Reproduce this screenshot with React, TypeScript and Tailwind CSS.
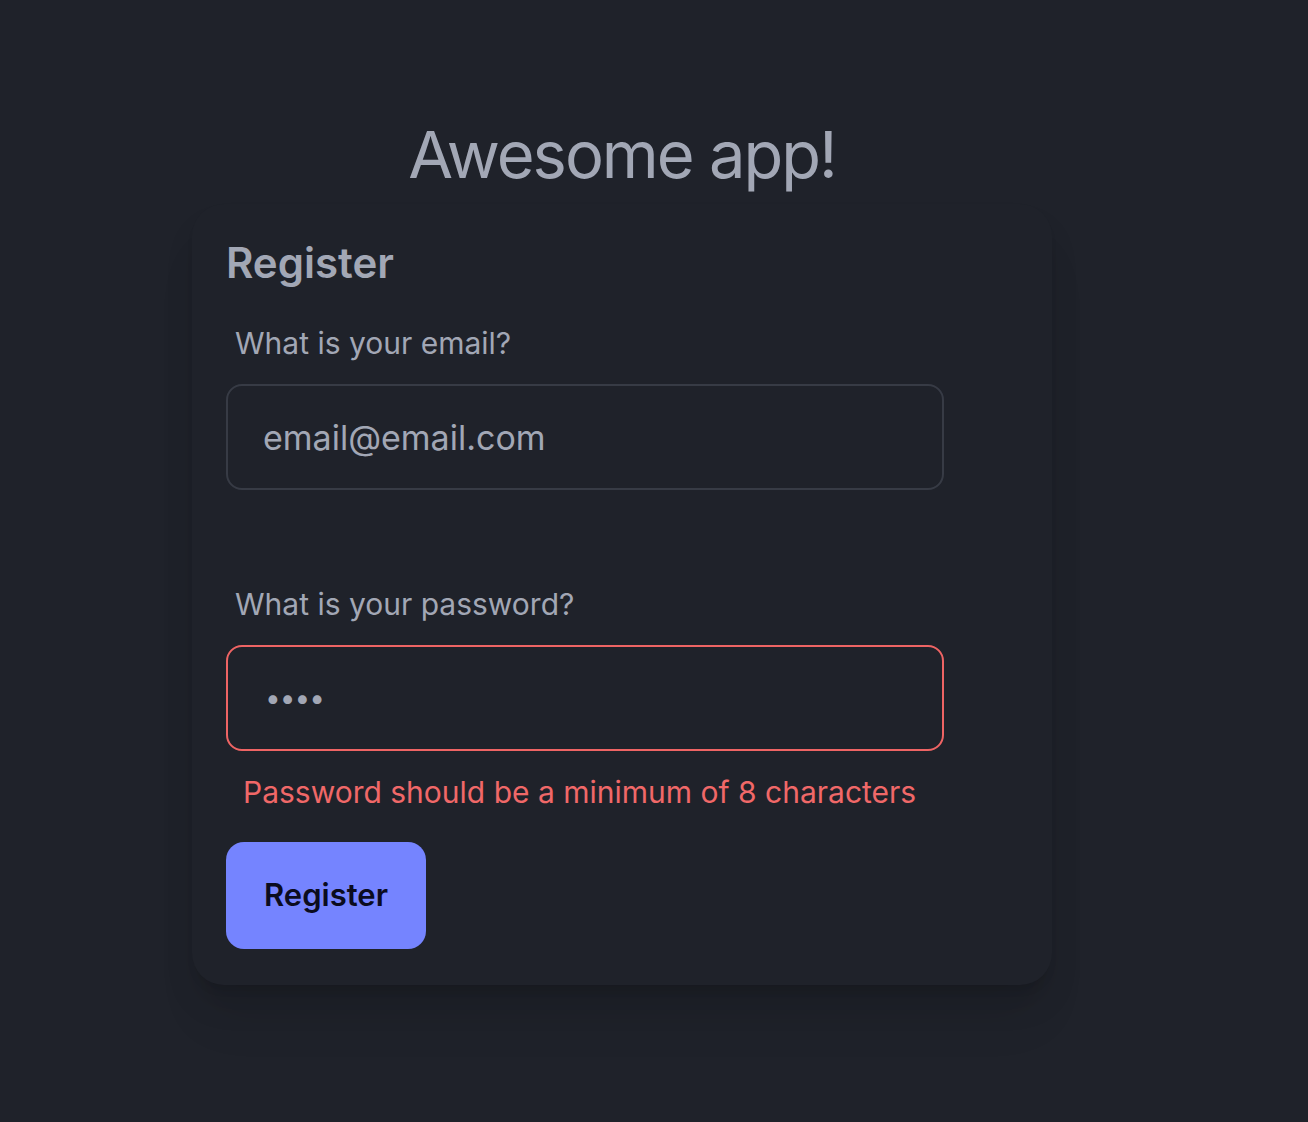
import React from "react";

const font = { fontFamily: "Inter, 'Noto Sans', sans-serif" };

export default function App() {
    return (
        <div style={font} className="min-h-screen w-full bg-[#1f222a] flex flex-col items-center pt-[115px] pr-[64px] pb-[100px]">
            <h1 className="text-[65px] leading-[80px] font-normal text-[#a2a7b5] tracking-[-2px] mb-[9px]">Awesome app!</h1>
            <div className="w-[860px] rounded-[32px] bg-[#1f222a] px-[34px] pt-[34px] pb-[36px] shadow-[0_8px_10px_-4px_rgba(7,9,12,0.1),0_22px_34px_-6px_rgba(7,9,12,0.12),0_44px_50px_-8px_rgba(7,9,12,0.06)]">
                <h2 className="text-[42px] leading-[50px] font-semibold text-[#a2a7b5] tracking-[0px]">Register</h2>
                <form className="w-[718px] flex flex-col mt-[35px]">
                    <label className="pl-[9px] text-[30px] leading-[40px] text-[#a2a7b5] mb-[21px]">What is your email?</label>
                    <input
                        type="email"
                        defaultValue="email@email.com"
                        readOnly
                        className="h-[106px] w-full rounded-[16px] border-2 border-[#373b45] bg-[#1f222a] pl-[35px] text-[34px] text-[#a2a7b5] outline-none"
                    />
                    <label className="mt-[94px] pl-[9px] text-[30px] leading-[40px] text-[#a2a7b5] mb-[21px]">What is your password?</label>
                    <input
                        type="password"
                        defaultValue="1234"
                        readOnly
                        className="h-[106px] w-full rounded-[16px] border-2 border-[#ee6464] bg-[#1f222a] pl-[37px] text-[28px] tracking-[-1px] text-[#a2a7b5] outline-none"
                    />
                    <p className="mt-[21px] pl-[17px] text-[30px] leading-[40px] text-[#f06868]">Password should be a minimum of 8 characters</p>
                    <button
                        type="button"
                        className="mt-[30px] h-[107px] w-[200px] rounded-[18px] bg-[#7584ff] text-[31px] font-semibold text-[#0b0c1f]"
                    >
                        Register
                    </button>
                </form>
            </div>
        </div>
    );
}
